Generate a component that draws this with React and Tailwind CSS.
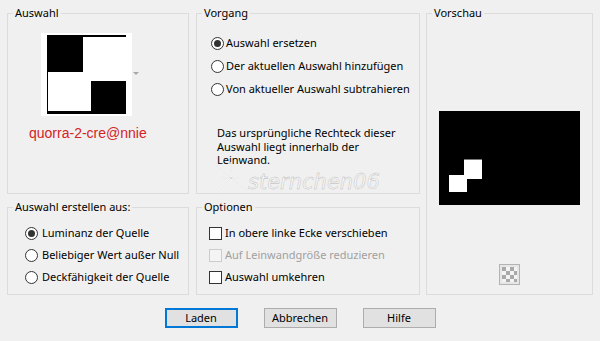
import React from "react";

function Group({ title, className = "", children }) {
  return (
    <fieldset className={`border border-[#dcdcdc] ${className}`}>
      <legend className="ml-[5px] px-[2px] text-[11px] leading-[16px] text-black">{title}</legend>
      {children}
    </fieldset>
  );
}

function Radio({ checked, label, gap = "ml-[2px]", h = "h-[23px]" }) {
  return (
    <div className={`flex items-center ${h}`}>
      <span className="flex h-[13px] w-[13px] items-center justify-center rounded-full border border-[#333333] bg-white">
        {checked && <span className="h-[7px] w-[7px] rounded-full bg-[#333333]" />}
      </span>
      <span className={gap}>{label}</span>
    </div>
  );
}

function Check({ label, disabled }) {
  return (
    <div className="flex h-[22px] items-center">
      <span
        className={`h-[13px] w-[13px] border ${disabled ? "border-[#cccccc] bg-[#f4f4f4]" : "border-[#333333] bg-white"}`}
      />
      <span className={`ml-[3px] ${disabled ? "text-[#a0a0a0]" : ""}`}>{label}</span>
    </div>
  );
}

export default function App() {
  return (
    <div className="relative h-[341px] w-[600px] overflow-hidden bg-[#f0f0f0] px-[7px] pt-[5px] font-['Noto_Sans',sans-serif] text-[11px] text-black">
      <div className="flex">
        <div className="grid grid-cols-[182px_224px] grid-rows-[189px_96px] gap-x-[7px] gap-y-[5px]">
          <Group title="Auswahl" className="h-[189px] w-[182px]">
            <div className="flex flex-col items-start">
              <div className="ml-[33px] mt-[12px] flex items-center">
                <div className="h-[83px] w-[91px] bg-white">
                  <svg width="91" height="83" viewBox="0 0 91 83">
                    <rect x="6" y="2" width="79" height="79" fill="#000" />
                    <rect x="42" y="4" width="43" height="44" fill="#fff" />
                    <rect x="7" y="39" width="43" height="39" fill="#fff" />
                  </svg>
                </div>
                <svg width="6" height="4" viewBox="0 0 6 4" className="ml-[1px] mt-[-2px]">
                  <path d="M0 0 L6 0 L3 3 Z" fill="#a8a8a8" />
                </svg>
              </div>
              <div className="ml-[21px] mt-[9px] font-['Liberation_Sans',Arial,sans-serif] text-[14px] leading-[16px] text-[#d42323]">
                quorra-2-cre@nnie
              </div>
            </div>
          </Group>

          <Group title="Vorgang" className="relative h-[189px] w-[224px]">
            <div className="pl-[14px] pt-[11px]">
              <Radio checked label="Auswahl ersetzen" />
              <Radio label="Der aktuellen Auswahl hinzufügen" />
              <Radio label="Von aktueller Auswahl subtrahieren" />
            </div>
            <p className="ml-[20px] mt-[25px] leading-[13.5px]">
              Das ursprüngliche Rechteck dieser
              <br />
              Auswahl liegt innerhalb der
              <br />
              Leinwand.
            </p>
          </Group>

          <Group title="Auswahl erstellen aus:" className="h-[96px] w-[182px]">
            <div className="pl-[17px] pt-[7px]">
              <Radio checked label="Luminanz der Quelle" gap="ml-[4px]" h="h-[22px]" />
              <Radio label="Beliebiger Wert außer Null" gap="ml-[4px]" h="h-[22px]" />
              <Radio label="Deckfähigkeit der Quelle" gap="ml-[4px]" h="h-[22px]" />
            </div>
          </Group>

          <Group title="Optionen" className="h-[96px] w-[224px]">
            <div className="pl-[12px] pt-[7px]">
              <Check label="In obere linke Ecke verschieben" />
              <Check label="Auf Leinwandgröße reduzieren" disabled />
              <Check label="Auswahl umkehren" />
            </div>
          </Group>
        </div>

        <Group title="Vorschau" className="ml-[6px] h-[290px] w-[168px]">
          <div className="flex flex-col items-center">
            <div className="mt-[90px] h-[94px] w-[141px] bg-black">
              <svg width="141" height="94" viewBox="0 0 141 94">
                <rect x="25" y="48" width="18" height="20" fill="#fff" />
                <rect x="25" y="48" width="18" height="1" fill="#777" />
                <rect x="10" y="64" width="18" height="17" fill="#fff" />
              </svg>
            </div>
            <div className="mt-[59px] flex h-[21px] w-[21px] items-center justify-center border border-[#b4b4b4] bg-[#e6e6e6]">
              <svg width="15" height="15" viewBox="0 0 15 15">
                <rect width="15" height="15" fill="#f4f4f4" />
                <rect x="0" y="0" width="4" height="4" fill="#a9a9a9" />
                <rect x="8" y="0" width="4" height="4" fill="#a9a9a9" />
                <rect x="4" y="4" width="4" height="4" fill="#a9a9a9" />
                <rect x="12" y="4" width="3" height="4" fill="#a9a9a9" />
                <rect x="0" y="8" width="4" height="4" fill="#a9a9a9" />
                <rect x="8" y="8" width="4" height="4" fill="#a9a9a9" />
                <rect x="4" y="12" width="4" height="3" fill="#a9a9a9" />
                <rect x="12" y="12" width="3" height="3" fill="#a9a9a9" />
              </svg>
            </div>
          </div>
        </Group>
      </div>

      <div className="mt-[13px] flex justify-center gap-[26px] text-[11px]">
        <button className="h-[20px] w-[73px] border-2 border-[#0078d7] bg-[#e1e1e1] leading-[16px]">Laden</button>
        <button className="h-[20px] w-[73px] border border-[#adadad] bg-[#e1e1e1] leading-[18px]">Abbrechen</button>
        <button className="h-[20px] w-[73px] border border-[#adadad] bg-[#e1e1e1] leading-[18px]">Hilfe</button>
      </div>

      {/* watermark overlay */}
      <div className="pointer-events-none absolute left-[212px] top-[160px] flex items-center">
        <svg width="40" height="34" viewBox="0 0 40 34">
          <g stroke="#ffffff" strokeWidth="1.4" fill="none">
            <path d="M4 6 L34 30 M32 4 L6 32 M19 2 L19 13 M8 18 L30 18" />
          </g>
          <g stroke="#c4c4c4" strokeWidth="0.5" fill="none">
            <path d="M4 6 L34 30 M32 4 L6 32 M19 2 L19 13 M8 18 L30 18" />
          </g>
        </svg>
        <span className="-ml-[4px] mt-[10px] font-['DejaVu_Sans',sans-serif] text-[21px] italic leading-[22px] text-[#f6f6f6] [-webkit-text-stroke:0.4px_#b8b8b8]">
          sternchen06
        </span>
      </div>
    </div>
  );
}
